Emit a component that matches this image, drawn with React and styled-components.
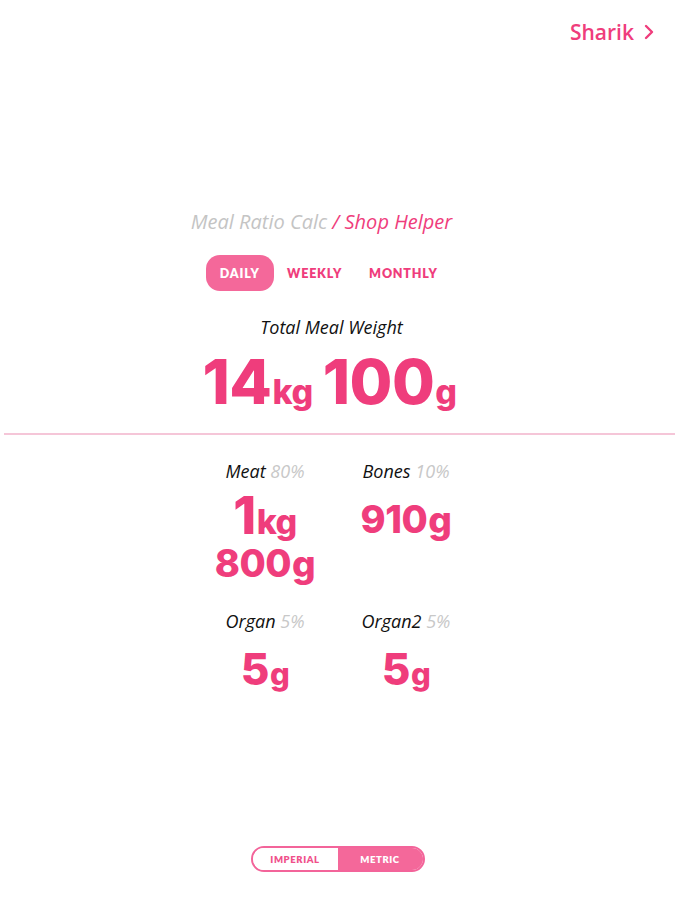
import React from 'react';
import styled, { createGlobalStyle } from 'styled-components';

const PINK = '#ef3d7c';

const GlobalStyle = createGlobalStyle`
  html, body {
    margin: 0;
    padding: 0;
    background: #fff;
  }
  body {
    font-family: 'Open Sans', 'Liberation Sans', sans-serif;
  }
`;

const Page = styled.div`
  min-height: 100vh;
  display: flex;
  flex-direction: column;
  box-sizing: border-box;
`;

const Header = styled.header`
  display: flex;
  justify-content: flex-end;
  padding: 18px 20px 0 0;
`;

const UserLink = styled.a`
  display: flex;
  align-items: center;
  gap: 9px;
  color: ${PINK};
  font-family: 'Open Sans', sans-serif;
  font-weight: 600;
  font-size: 21px;
  line-height: 28px;
  text-decoration: none;
`;

const Main = styled.main`
  display: flex;
  flex-direction: column;
  align-items: center;
  padding-top: 164px;
`;

const Title = styled.h1`
  margin: 0;
  font-family: 'Open Sans', sans-serif;
  font-style: italic;
  font-weight: 400;
  font-size: 20px;
  line-height: 24px;
  color: #c4c4c4;
  transform: translateX(-16px);
`;

const TitleActive = styled.span`
  color: ${PINK};
`;

const Tabs = styled.nav`
  display: flex;
  align-items: center;
  margin-top: 21px;
  transform: translateX(-9px);
`;

const Tab = styled.button`
  border: none;
  height: 36px;
  padding: 0 ${p => (p.$active ? '14px' : '13.5px')};
  border-radius: 14px;
  background: ${p => (p.$active ? '#f4689a' : 'transparent')};
  color: ${p => (p.$active ? '#fff' : PINK)};
  font-family: 'Lato', sans-serif;
  font-weight: 800;
  font-size: 12.5px;
  letter-spacing: 0.8px;
  cursor: pointer;
`;

const Label = styled.div`
  font-family: 'Open Sans', sans-serif;
  font-style: italic;
  font-size: 18px;
  line-height: 22px;
  color: #111;
  text-align: center;
`;

const Percent = styled.span`
  color: #c8c8c8;
`;

const TotalLabel = styled(Label)`
  margin-top: 25px;
  transform: translateX(-6px);
`;

const ValueLine = styled.div`
  font-family: 'Inter', 'Liberation Sans', sans-serif;
  font-weight: 800;
  color: ${PINK};
  font-size: ${p => p.$size}px;
  line-height: ${p => p.$lh}px;
  white-space: nowrap;
  text-align: center;
  letter-spacing: -0.5px;
`;

const Unit = styled.span`
  font-size: ${p => p.$size}px;
  margin-left: 1px;
  margin-right: ${p => p.$gap || 0}px;
`;

const TotalValue = styled(ValueLine)`
  margin-top: 14px;
  transform: translateX(-8px);
`;

const Divider = styled.hr`
  align-self: stretch;
  margin: 11px 0 0 4px;
  border: none;
  height: 2px;
  background: #f5c6d8;
`;

const Grid = styled.div`
  display: grid;
  grid-template-columns: 141px 141px;
  row-gap: 26px;
  margin-top: 25px;
  transform: translateX(-2px);
`;

const Cell = styled.div`
  display: flex;
  flex-direction: column;
  align-items: center;
`;

const AmountBlock = styled.div`
  margin-top: ${p => p.$mt}px;
`;

const Footer = styled.footer`
  margin-top: auto;
  display: flex;
  justify-content: center;
  padding-bottom: 28px;
`;

const Toggle = styled.div`
  display: flex;
  width: 174px;
  height: 26px;
  box-sizing: border-box;
  border: 2px solid #f3649a;
  border-radius: 13px;
  overflow: hidden;
`;

const ToggleOption = styled.button`
  flex: 1;
  border: none;
  background: ${p => (p.$active ? '#f4689a' : '#fff')};
  color: ${p => (p.$active ? '#fff' : '#f0508a')};
  font-family: 'Lato', sans-serif;
  font-weight: 800;
  font-size: 9.5px;
  letter-spacing: 0.6px;
  padding: 0;
`;

const Chevron = () => (
  <svg width="12" height="16" viewBox="0 0 12 16" fill="none">
    <path d="M3 2l6 6-6 6" stroke={PINK} strokeWidth="2.4" strokeLinecap="round" strokeLinejoin="round" />
  </svg>
);

const Amount = ({ lines, mt }) => (
  <AmountBlock $mt={mt}>
    {lines.map(([n, u, ns, us, lh], i) => (
      <ValueLine key={i} $size={ns} $lh={lh}>
        {n}
        <Unit $size={us}>{u}</Unit>
      </ValueLine>
    ))}
  </AmountBlock>
);

const ingredients = [
  { name: 'Meat', pct: '80%', mt: 13, lines: [['1', 'kg', 52, 34, 42], ['800', 'g', 38, 37, 40]] },
  { name: 'Bones', pct: '10%', mt: 14, lines: [['910', 'g', 38, 37, 46]] },
  { name: 'Organ', pct: '5%', mt: 12, lines: [['5', 'g', 44, 31, 50]] },
  { name: 'Organ2', pct: '5%', mt: 12, lines: [['5', 'g', 44, 31, 50]] },
];

const App = () => (
  <Page>
    <GlobalStyle />
    <Header>
      <UserLink href="#">
        Sharik
        <Chevron />
      </UserLink>
    </Header>
    <Main>
      <Title>
        Meal Ratio Calc <TitleActive>/ Shop Helper</TitleActive>
      </Title>
      <Tabs>
        <Tab $active>DAILY</Tab>
        <Tab>WEEKLY</Tab>
        <Tab>MONTHLY</Tab>
      </Tabs>
      <TotalLabel>Total Meal Weight</TotalLabel>
      <TotalValue $size={62} $lh={60}>
        14
        <Unit $size={34} $gap={10}>kg</Unit>
        100
        <Unit $size={34}>g</Unit>
      </TotalValue>
      <Divider />
      <Grid>
        {ingredients.map(item => (
          <Cell key={item.name}>
            <Label>
              {item.name} <Percent>{item.pct}</Percent>
            </Label>
            <Amount lines={item.lines} mt={item.mt} />
          </Cell>
        ))}
      </Grid>
    </Main>
    <Footer>
      <Toggle>
        <ToggleOption>IMPERIAL</ToggleOption>
        <ToggleOption $active>METRIC</ToggleOption>
      </Toggle>
    </Footer>
  </Page>
);

export default App;
